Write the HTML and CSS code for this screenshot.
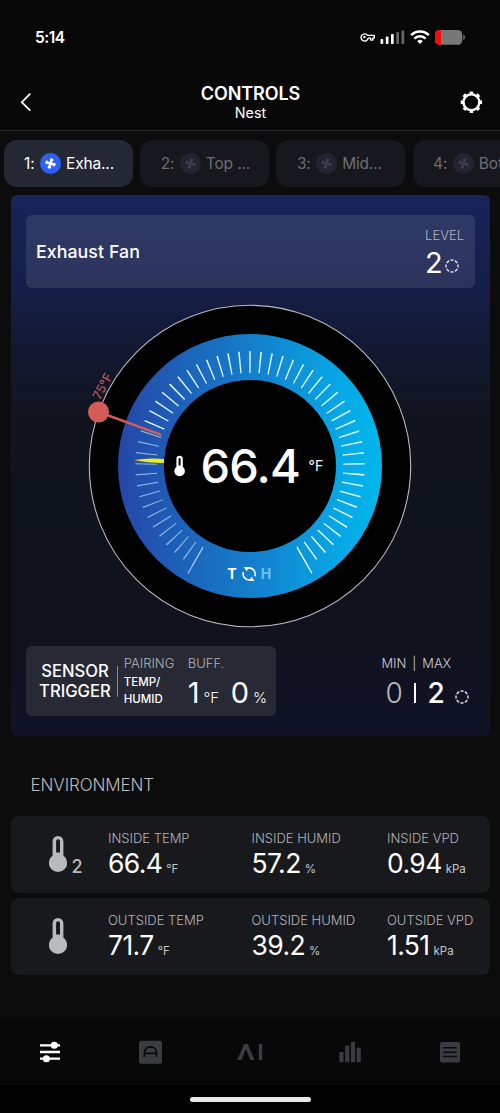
FILE: index.html
```html
<!DOCTYPE html>
<html lang="en">
<head>
<meta charset="utf-8">
<title>Controls</title>
<link rel="stylesheet" href="styles.css">
</head>
<body>
<svg width="0" height="0" class="defs">
  <symbol id="fan" viewBox="-10.5 -10.5 21 21">
    <g fill="currentColor" transform="rotate(8)">
      <path id="blade" d="M-1 0V-4.4C-1-5.8 2.5-5.5 2.4-3.7 2.3-2.5.9-2.6.9 0Z"/>
      <use href="#blade" transform="rotate(90)"/><use href="#blade" transform="rotate(180)"/><use href="#blade" transform="rotate(270)"/>
    </g>
  </symbol>
  <symbol id="ring" viewBox="-7 -7 14 14"><circle r="6" fill="none" stroke="currentColor" stroke-width="1.5" pathLength="80" stroke-dasharray="6.8 3.2" stroke-dashoffset="3.4"/></symbol>
  <symbol id="thermo" viewBox="0 0 18 37"><path fill="currentColor" fill-rule="evenodd" d="M3.6 5.4a5.4 5.4 0 0 1 10.8 0V19.6a9.1 9.1 0 1 1-10.8 0ZM7.1 5.2V16.6H11V5.2a1.95 1.95 0 0 0-3.9 0Z"/></symbol>
</svg>
<div class="status">
  <span class="clock">5:14</span>
  <svg class="status-icons" width="106" height="20" viewBox="0 0 106 20">
    <g fill="none" stroke="#fff" stroke-width="1.4" stroke-linejoin="round"><path d="M7.6 8.6H14.2V11.3H12.8V13.3H10.6V11.3H8.2A3.6 3.6 0 1 1 7.6 8.6Z" transform="translate(0 -.2)"/><circle cx="4.4" cy="10" r=".5"/></g>
    <g fill="#fff"><rect x="20.5" y="12" width="2.7" height="5" rx=".8"/><rect x="25.8" y="9.6" width="2.7" height="7.4" rx=".8"/><rect x="31" y="7" width="2.7" height="10" rx=".8"/></g>
    <g fill="#666"><rect x="36.3" y="5" width="2.7" height="12" rx=".8"/><rect x="41.5" y="3.6" width="2.7" height="13.4" rx=".8"/></g>
    <g fill="none" stroke="#fff" stroke-width="2.5"><path d="M51.2 8.2A12.2 12.2 0 0 1 68.8 8.2"/><path d="M54.4 11.6A7.8 7.8 0 0 1 65.6 11.6"/></g>
    <path d="M57.2 14.2A4 4 0 0 1 62.8 14.2L60 17Z" fill="#fff"/>
    <clipPath id="battery"><rect x="75" y="3" width="27.3" height="14.8" rx="4.6"/></clipPath>
    <g clip-path="url(#battery)"><path fill="#777" d="M75 3H103V18H75Z"/><path fill="#f60d0a" d="M75 3H81V18H75Z"/></g>
    <path d="M103.3 7.8Q105 8.6 105 10.4T103.3 13Z" fill="#777"/>
  </svg>
</div>
<header class="header">
  <svg width="14" height="20" viewBox="0 0 14 20"><path d="M12.3 1.7 3.8 10.2 12.3 18.7" fill="none" stroke="#fff" stroke-width="1.7"/></svg>
  <div class="heading"><h1>CONTROLS</h1><p>Nest</p></div>
  <svg width="24" height="24" viewBox="-12.4 -12.2 24 24"><circle r="7.9" fill="none" stroke="#fff" stroke-width="2.4"/><circle r="9.4" fill="none" stroke="#fff" stroke-width="2.6" pathLength="80" stroke-dasharray="4.8 5.2" stroke-dashoffset="2.4"/></svg>
</header>
<nav class="tabs">
  <div class="tab active"><span>1:</span><svg class="fan"><use href="#fan"/></svg><span>Exha...</span></div>
  <div class="tab"><span>2:</span><svg class="fan"><use href="#fan"/></svg><span>Top ...</span></div>
  <div class="tab"><span>3:</span><svg class="fan"><use href="#fan"/></svg><span>Mid...</span></div>
  <div class="tab"><span>4:</span><svg class="fan"><use href="#fan"/></svg><span>Bot</span></div>
</nav>
<main>
  <section class="card">
    <div class="device">
      <h2>Exhaust Fan</h2>
      <div class="level"><span class="label">LEVEL</span><div class="level-value"><b>2</b><svg class="ring"><use href="#ring"/></svg></div></div>
    </div>
    <svg class="dial" width="336" height="330" viewBox="-168 -165 336 330">
      <defs>
        <linearGradient id="band" gradientUnits="userSpaceOnUse" x1="-132" x2="132" y1="0" y2="0"><stop offset="0" stop-color="#2546a7"/><stop offset=".5" stop-color="#147ecb"/><stop offset=".88" stop-color="#06ace8"/><stop offset="1" stop-color="#00b7ea"/></linearGradient>
      </defs>
      <circle r="160.7" fill="#000" stroke="#b9b9be" stroke-width="1.1"/>
      <circle r="109" fill="none" stroke="url(#band)" stroke-width="46"/>
      <g fill="none" stroke="#e0f8fc" stroke-width="21.5">
        <path class="dim" pathLength="145" stroke-dasharray="1.1 8.9" stroke-dashoffset=".55" d="M-52 90.07A104 104 0 0 1-97.38-36.52"/>
        <path pathLength="395" stroke-dasharray="1.4 8.6" stroke-dashoffset="-4.3" d="M-97.38-36.52A104 104 0 1 1 52 90.07"/>
      </g>
      <path class="dim" d="M-47 81.4-62 107.4" stroke="#e0f8fc" stroke-width="1.2"/>
      <path d="M47 81.4 62 107.4" stroke="#e0f8fc" stroke-width="1.3"/>
      <path d="M-151.5-54-88.5-31.2" stroke="#d35c59" stroke-width="2.4"/>
      <circle cx="-151.5" cy="-54" r="10.5" fill="#d35c59"/>
      <path d="M-116-6Q-100-8.6-86-6.9V-2.9Q-102-3-116-6Z" fill="#eff00f"/>
      <text class="target" transform="translate(-150 -65.5) rotate(-62)">75°F</text>
      <path fill="#fff" fill-rule="evenodd" d="M-73.6-7.1a3.2 3.2 0 0 1 6.4 0V.8a5.3 5.3 0 1 1-6.4 0ZM-71.4-7V-.5H-69.4V-7a1 1 0 0 0-2 0Z"/>
      <text class="reading" x="-49.5" y="17">66.4</text>
      <text class="unit" x="58.5" y="4.5">°F</text>
      <text class="mode" x="-22.7" y="113">T</text>
      <text class="mode off" x="10.7" y="113">H</text>
      <g fill="none" stroke="#fff" stroke-width="1.5"><path d="M-3.5 102.6A6 6 0 0 1 4.7 110.3M1.7 113.3A6 6 0 0 1-6.6 106"/></g>
      <path fill="#fff" d="M-6.3 101.1H-1.2L-3.2 105.2Z"/><path fill="#fff" d="M4.5 114.9H-.6L1.4 110.8Z"/>
    </svg>
    <div class="bottom">
      <div class="sensor">
        <strong>SENSOR<br>TRIGGER</strong>
        <div class="pairing"><span class="label">PAIRING</span><b>TEMP/<br>HUMID</b></div>
        <div class="buffer"><span class="label">BUFF.</span><div class="buffer-values"><b>1</b><i>°F</i><b class="second">0</b><i>%</i></div></div>
      </div>
      <div class="range">
        <div class="range-label"><span>MIN</span><span>|</span><span>MAX</span></div>
        <div class="range-value"><span class="min">0</span><span class="bar"></span><b>2</b><svg class="ring"><use href="#ring"/></svg></div>
      </div>
    </div>
  </section>
  <h3>ENVIRONMENT</h3>
  <section class="env">
    <div class="probe"><svg width="18" height="37"><use href="#thermo"/></svg><span>2</span></div>
    <div><span class="label">INSIDE TEMP</span><p>66.4<small>°F</small></p></div>
    <div><span class="label">INSIDE HUMID</span><p>57.2<small>%</small></p></div>
    <div><span class="label">INSIDE VPD</span><p>0.94<small>kPa</small></p></div>
  </section>
  <section class="env">
    <div class="probe"><svg width="18" height="37"><use href="#thermo"/></svg></div>
    <div><span class="label">OUTSIDE TEMP</span><p>71.7<small>°F</small></p></div>
    <div><span class="label">OUTSIDE HUMID</span><p>39.2<small>%</small></p></div>
    <div><span class="label">OUTSIDE VPD</span><p>1.51<small>kPa</small></p></div>
  </section>
</main>
<nav class="nav">
  <svg viewBox="-15 -15 30 30"><g stroke="#fff" stroke-width="2.3" fill="#fff"><path d="M-10-6.7H10M-10 0H10M-10 6.7H10"/><circle cx="4.3" cy="-6.7" r="2.4"/><circle cx="-3.6" cy="6.7" r="2.4"/></g></svg>
  <svg viewBox="-15 -15 30 30"><rect x="-11" y="-11.3" width="23" height="23" rx="2"/><path d="M-5.6 5V1C-5.6-7.2 6.6-7.2 6.6 1V5M-5.6 1.3H6.6" fill="none" stroke="#09090a" stroke-width="1.7"/></svg>
  <svg viewBox="-15 -15 30 30"><path d="M-12.7 8-5.8-8H-2.3L4.5 8H.2L-4-3.2-8.4 8ZM8.8-8H12.2V8H8.8Z"/></svg>
  <svg viewBox="-15 -15 30 30"><rect x="-10.7" y="0" width="4.2" height="10.3" rx=".7"/><rect x="-4.9" y="-6.5" width="4.2" height="16.8" rx=".7"/><rect x=".9" y="-10" width="4.2" height="20.3" rx=".7"/><rect x="6.6" y="-4.3" width="4.2" height="14.6" rx=".7"/></svg>
  <svg viewBox="-15 -15 30 30"><rect x="-10" y="-10" width="20" height="20.5" rx="1.8"/><path d="M-6.8-4.2H6.8M-6.8 .2H6.8M-6.8 4.6H6.8" stroke="#09090a" stroke-width="1.5"/></svg>
</nav>
<div class="home"><span></span></div>
</body>
</html>
```
FILE: styles.css
```css
* { box-sizing: border-box; }
body { margin: 0; width: 500px; height: 1113px; overflow: hidden; background: #0c0c0c; color: #fff; font-family: Inter, "Liberation Sans", sans-serif; display: flex; flex-direction: column; }
h1, h2, h3, p { margin: 0; font-weight: 400; }
svg { display: block; flex: none; }
.defs { display: none; }
.label { display: block; font-size: 13px; line-height: 16px; font-weight: 300; color: #b4b4b8; white-space: nowrap; }

.status { height: 74px; padding: 27px 34px 0 35px; display: flex; justify-content: space-between; background: #080808; }
.clock { font-size: 15.5px; line-height: 21px; font-weight: 600; letter-spacing: -.5px; }
.header { height: 57px; padding: 0 17px 0 18px; display: flex; align-items: center; justify-content: space-between; background: #080808; border-bottom: 1px solid #29292b; }
.header > svg:first-child { margin-right: 10px; }
.heading { text-align: center; padding-top: 1px; }
.heading h1 { font-size: 18px; line-height: 20px; font-weight: 600; letter-spacing: -.1px; }
.heading p { font-size: 14.3px; line-height: 18px; }

.tabs { display: flex; gap: 7.2px; padding: 8.5px 0 0 4px; height: 64px; overflow: hidden; }
.tab { flex: none; width: 129px; height: 47px; border-radius: 13px; background: #17181d; color: #6c6c72; display: flex; align-items: center; padding-left: 20.5px; font-size: 15.5px; letter-spacing: -.15px; white-space: nowrap; }
.tab.active { background: #242835; color: #fff; padding-left: 20px; }
.fan { width: 21px; height: 21px; margin: 0 5px 0 5.5px; border-radius: 50%; background: #232431; color: #3d3e4c; }
.active .fan { background: #2d61f6; color: #fff; }

main { padding: 0 10.5px; flex: 1; }
.card { height: 541px; border-radius: 6px; padding: 20px 15px; background: linear-gradient(#18245a 0%, #151f4b 15%, #121831 29%, #11141d 42%, #0f131d 60%, #10121e 83%, #101328 100%); }
.device { height: 73px; border-radius: 6px; background: rgba(255, 255, 255, .1); display: flex; align-items: center; justify-content: space-between; padding: 0 10.5px; }
.device h2 { font-size: 17.8px; font-weight: 500; letter-spacing: .05px; }
.level { padding-top: 5px; }
.level-value { display: flex; align-items: center; }
.level-value b { font-size: 29px; line-height: 39px; font-weight: 400; }
.ring { width: 14px; height: 14px; color: #d5d8e0; }
.level-value .ring { margin: 7px 0 0 2.5px; }

.dial { margin: 13px auto 0; display: block; }
.dim { opacity: .6; }
.target { font-size: 12.5px; fill: #d35c59; }
.reading { font-size: 47px; font-weight: 450; letter-spacing: -.8px; fill: #fff; }
.unit { font-size: 14px; fill: #fff; }
.mode { font-size: 14px; font-weight: 700; fill: #fff; }
.mode.off { fill: #6ec4ec; }

.bottom { margin-top: 15px; display: flex; justify-content: space-between; }
.sensor { width: 250px; height: 70px; border-radius: 6px; background: #272935; display: flex; padding: 10px 0 0 13.6px; }
.sensor strong { height: 50px; font-size: 16.6px; line-height: 20px; font-weight: 500; text-align: center; padding-top: 4.5px; }
.pairing { margin-left: 6px; position: relative; padding-left: 7px; }
.pairing::before { content: ""; position: absolute; left: 0; top: 10px; width: 1px; height: 31px; background: #8b8c93; }
.pairing b { display: block; font-size: 11.5px; line-height: 16.5px; font-weight: 500; padding-top: 2.6px; }
.pairing .label, .buffer .label { margin-top: -.6px; }
.buffer { margin-left: 13.4px; }
.buffer-values { display: flex; align-items: baseline; margin-top: 4.6px; line-height: 34px; }
.buffer-values b { font-size: 29px; font-weight: 400; }
.buffer-values .second { margin-left: 11.5px; }
.buffer-values i { font-style: normal; font-size: 15px; font-weight: 300; margin-left: 4px; }
.range { width: 93px; padding-top: 9.5px; }
.range-label { display: flex; gap: 6px; font-size: 12.9px; line-height: 16px; font-weight: 300; color: #cfcfd3; }
.range-value { display: flex; align-items: center; line-height: 34px; margin: 4.5px 0 0 4px; font-size: 28px; }
.min { font-weight: 300; letter-spacing: -.5px; color: #b9bac0; }
.bar { width: 1.3px; height: 20px; margin: 0 12px; background: #fff; }
.range-value b { font-weight: 450; font-size: 28px; letter-spacing: -1px; }
.range-value .ring { margin: 7px 0 0 11px; }

h3 { font-size: 17px; line-height: 20px; font-weight: 300; color: #bbb; margin: 39px 0 21px 20px; letter-spacing: -.1px; }
.env { height: 77px; margin-bottom: 5px; background: #18191d; border-radius: 8px; display: grid; grid-template-columns: 97.5px 143.5px 135.5px 1fr; padding-top: 14px; }
.env p { font-size: 26.5px; line-height: 34px; letter-spacing: -.6px; display: flex; align-items: baseline; }
.env small { font-size: 11.5px; letter-spacing: 0; color: #c5c5c8; margin-left: 4px; }
.probe { display: flex; align-items: flex-end; height: 43px; padding-left: 38px; color: #b9babc; }
.probe span { font-size: 18px; line-height: 18px; font-weight: 500; margin: 0 0 -3px 5px; }

.nav { height: 67px; flex: none; background: #080808; display: flex; align-items: center; fill: #3b3b42; }
.nav svg { height: 30px; width: 100px; flex: 1; }
.home { height: 28px; flex: none; background: #000; padding-top: 12px; }
.home span { display: block; width: 121px; height: 5px; border-radius: 3px; background: #e8e8e8; margin: 0 auto; }
```
